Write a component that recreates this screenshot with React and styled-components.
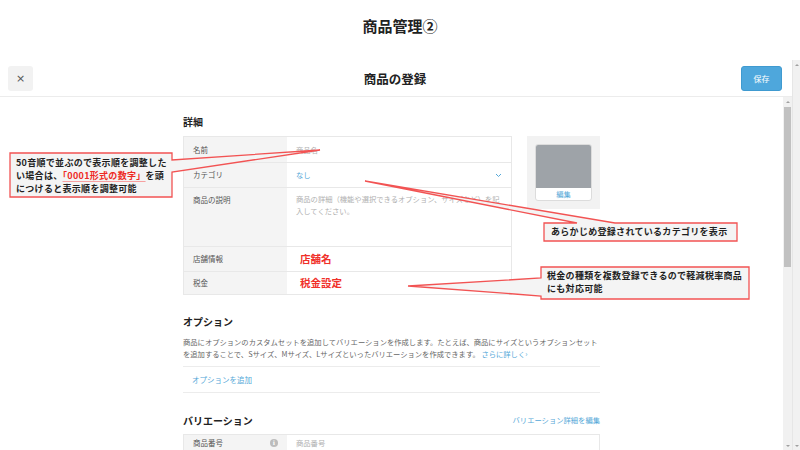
import React from "react";
import styled, { createGlobalStyle } from "styled-components";

const Global = createGlobalStyle`
  html, body { margin: 0; padding: 0; }
  body {
    width: 800px; height: 450px; overflow: hidden; background: #fff;
    font-family: "Noto Sans CJK JP", "Noto Sans", sans-serif; color: #333;
  }
  * { box-sizing: border-box; }
`;

const Page = styled.div`
  position: relative; width: 800px; height: 450px;
  display: flex; flex-direction: column; overflow: hidden;
`;

const TitleBar = styled.div`
  height: 60px; padding-bottom: 10px;
  display: flex; align-items: center; justify-content: center;
  font-size: 15px; font-weight: 700; color: #222;
`;

const Frame = styled.div`
  flex: 1; display: flex; min-height: 0;
`;

const Main = styled.div`
  flex: 1; display: flex; flex-direction: column; min-width: 0;
`;

const Header = styled.div`
  height: 37px; border-bottom: 1px solid #ececec;
  display: grid; grid-template-columns: 1fr auto 1fr; align-items: center;
  padding: 0 10px 0 8px;
`;

const CloseBtn = styled.div`
  width: 25px; height: 25px; border-radius: 3px; background: #f2f2f2;
  display: flex; align-items: center; justify-content: center;
  color: #555; font-size: 11px; font-family: "DejaVu Sans", sans-serif;
`;

const HeaderTitle = styled.div`
  font-size: 12.5px; font-weight: 700; color: #222;
`;

const SaveBtn = styled.div`
  justify-self: end; width: 41px; height: 25px; border-radius: 3px;
  background: #4ea7dc; border: 1px solid #3f9ad0;
  display: flex; align-items: center; justify-content: center;
  color: #fff; font-size: 8px;
`;

const Body = styled.div`
  flex: 1; display: flex; min-height: 0;
`;

const Content = styled.div`
  flex: 1; padding-top: 17px; overflow: hidden;
`;

const Column = styled.div`
  width: 417px; margin: 0 auto;
`;

const SectionHead = styled.div`
  display: flex; justify-content: space-between; align-items: center;
  height: 14px; margin-bottom: ${(p) => p.$mb || 8}px;
  margin-top: ${(p) => p.$mt || 0}px;
`;

const SectionTitle = styled.div`
  font-size: 10px; font-weight: 700; color: #222;
`;

const Link = styled.span`
  color: #55a8d8; font-size: ${(p) => p.$size || 7.3}px;
`;

const DetailRow = styled.div`
  display: flex; gap: 15px; align-items: flex-start;
`;

const Table = styled.div`
  width: ${(p) => p.$w || 329}px; border: 1px solid #e8e8e8;
  display: flex; flex-direction: column;
`;

const Row = styled.div`
  display: grid; grid-template-columns: 103px 1fr;
  height: ${(p) => p.$h}px;
  & + & { border-top: 1px solid #e8e8e8; }
`;

const Label = styled.div`
  background: #f4f4f4;
  padding: ${(p) => (p.$top != null ? `${p.$top}px 9px 0` : "0 9px")};
  display: flex; align-items: ${(p) => (p.$top != null ? "flex-start" : "center")};
  justify-content: space-between;
  font-size: 7.5px; color: #555; line-height: 12px;
`;

const Field = styled.div`
  padding: ${(p) => (p.$top != null ? `${p.$top}px 9px 0` : "0 9px")};
  display: flex; align-items: ${(p) => (p.$top != null ? "flex-start" : "center")};
  justify-content: space-between;
  font-size: 7.3px; line-height: 12px;
  color: ${(p) => p.$color || "#b0b0b0"};
`;

const RedValue = styled.span`
  color: #f0302a; font-weight: 700; font-size: 10.5px; padding-left: 4px;
`;

const InfoDot = styled.span`
  width: 8px; height: 8px; margin-top: 2px; border-radius: 50%; background: #bcbcbc;
  color: #fff; font-size: 6px; line-height: 8px; text-align: center;
  font-weight: 700; font-family: "DejaVu Serif", serif;
`;

const ImageBox = styled.div`
  width: 73px; height: 73px; background: #f2f2f2; padding: 8px;
`;

const ImageCard = styled.div`
  width: 57px; height: 57px; border: 1px solid #dcdcdc; border-radius: 3px;
  overflow: hidden; display: flex; flex-direction: column; background: #fff;
`;

const ImageArea = styled.div`
  flex: 1; background: #9ea3a8;
`;

const EditLabel = styled.div`
  height: 12px; display: flex; align-items: center; justify-content: center;
  color: #55a8d8; font-size: 7.3px;
`;

const Desc = styled.p`
  margin: 0 0 6px; font-size: 7.3px; line-height: 12px; color: #666;
`;

const AddRow = styled.div`
  height: 27px; border-top: 1px solid #ececec; border-bottom: 1px solid #ececec;
  display: flex; align-items: center; padding-left: 9px;
`;

const ScrollTrack = styled.div`
  width: ${(p) => p.$w}px; background: #f1f1f1;
  display: flex; flex-direction: column; align-items: center;
  border-left: ${(p) => (p.$border ? "1px solid #e6e6e6" : "none")};
`;

const Arrow = styled.div`
  width: 0; height: 0; margin: ${(p) => p.$m};
  border-left: 2px solid transparent; border-right: 2px solid transparent;
  ${(p) => (p.$down ? "border-top: 2px solid #a0a0a0;" : "border-bottom: 2px solid #a0a0a0;")}
`;

const Thumb = styled.div`
  width: 7px; height: 160px; background: #c1c1c1; margin-top: 2px;
`;

const Spacer = styled.div`
  flex: 1;
`;

const Overlay = styled.svg`
  position: absolute; left: 0; top: 0; pointer-events: none;
`;

const CalloutText = styled.div`
  position: absolute; left: ${(p) => p.$x}px; top: ${(p) => p.$y}px;
  font-size: 9px; line-height: 13px; font-weight: 700; color: #1e1e1e;
  letter-spacing: 0.3px; white-space: nowrap;
`;

const Mark = styled.span`
  color: #ee2a24; text-decoration: underline; text-decoration-color: #f7a0a0;
  text-underline-offset: 2px;
`;

const Chevron = () => (
  <svg width="7" height="5" viewBox="0 0 7 5">
    <polyline points="1,1 3.5,3.5 6,1" fill="none" stroke="#55a8d8" strokeWidth="1" />
  </svg>
);

const callouts = [
  "10,153 172,153 172,160 320,150 172,172 172,197 10,197",
  "544,223 577,223 365,181 615,223 737,223 737,241 544,241",
  "541,267 749,267 749,299 541,299 541,296 408,286 541,278",
];

export default function App() {
  return (
    <>
      <Global />
      <Page>
        <TitleBar>商品管理②</TitleBar>
        <Frame>
          <Main>
            <Header>
              <CloseBtn>×</CloseBtn>
              <HeaderTitle>商品の登録</HeaderTitle>
              <SaveBtn>保存</SaveBtn>
            </Header>
            <Body>
              <Content>
                <Column>
                  <SectionHead>
                    <SectionTitle>詳細</SectionTitle>
                  </SectionHead>
                  <DetailRow>
                    <Table>
                      <Row $h={25}>
                        <Label>名前</Label>
                        <Field>商品名</Field>
                      </Row>
                      <Row $h={25}>
                        <Label>カテゴリ</Label>
                        <Field $color="#55a8d8">
                          なし
                          <Chevron />
                        </Field>
                      </Row>
                      <Row $h={59}>
                        <Label $top={6}>商品の説明</Label>
                        <Field $top={5}>
                          商品の詳細（機能や選択できるオプション、サイズなど）を記入してください。
                        </Field>
                      </Row>
                      <Row $h={25}>
                        <Label>店舗情報</Label>
                        <Field>
                          <RedValue>店舗名</RedValue>
                        </Field>
                      </Row>
                      <Row $h={23}>
                        <Label>税金</Label>
                        <Field>
                          <RedValue>税金設定</RedValue>
                        </Field>
                      </Row>
                    </Table>
                    <ImageBox>
                      <ImageCard>
                        <ImageArea />
                        <EditLabel>編集</EditLabel>
                      </ImageCard>
                    </ImageBox>
                  </DetailRow>

                  <SectionHead $mt={19} $mb={8}>
                    <SectionTitle>オプション</SectionTitle>
                  </SectionHead>
                  <Desc>
                    商品にオプションのカスタムセットを追加してバリエーションを作成します。たとえば、商品にサイズというオプションセットを追加することで、Sサイズ、Mサイズ、Lサイズといったバリエーションを作成できます。
                    <Link> さらに詳しく›</Link>
                  </Desc>
                  <AddRow>
                    <Link $size={7.5}>オプションを追加</Link>
                  </AddRow>

                  <SectionHead $mt={20} $mb={7}>
                    <SectionTitle>バリエーション</SectionTitle>
                    <Link>バリエーション詳細を編集</Link>
                  </SectionHead>
                  <Table $w={417}>
                    <Row $h={30}>
                      <Label $top={2}>
                        商品番号
                        <InfoDot>i</InfoDot>
                      </Label>
                      <Field $top={2}>商品番号</Field>
                    </Row>
                  </Table>
                </Column>
              </Content>
              <ScrollTrack $w={9}>
                <Arrow $m="4px 0 2px" />
                <Thumb />
                <Spacer />
                <Arrow $down $m="0 0 3px" />
              </ScrollTrack>
            </Body>
          </Main>
          <ScrollTrack $w={8} $border>
            <Arrow $m="4px 0 0" />
            <Spacer />
            <Arrow $down $m="0 0 3px" />
          </ScrollTrack>
        </Frame>

        <Overlay width="800" height="450" viewBox="0 0 800 450">
          {callouts.map((pts) => (
            <polygon key={pts} points={pts} fill="#f4f4f4" stroke="#f25353" strokeWidth="1.3" strokeLinejoin="miter" />
          ))}
        </Overlay>
        <CalloutText $x={16} $y={156}>
          50音順で並ぶので表示順を調整した
          <br />
          い場合は、<Mark>「0001形式の数字」</Mark>を頭
          <br />
          につけると表示順を調整可能
        </CalloutText>
        <CalloutText $x={551} $y={225}>
          あらかじめ登録されているカテゴリを表示
        </CalloutText>
        <CalloutText $x={547} $y={269}>
          税金の種類を複数登録できるので軽減税率商品
          <br />
          にも対応可能
        </CalloutText>
      </Page>
    </>
  );
}
